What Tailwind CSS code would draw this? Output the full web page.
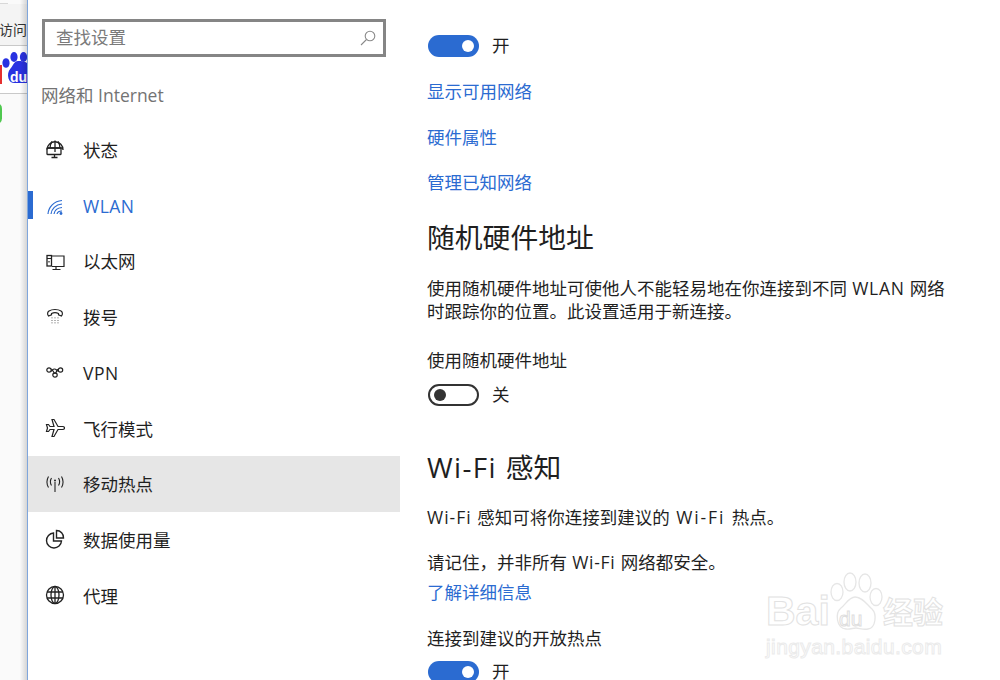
<!DOCTYPE html>
<html lang="zh">
<head>
<meta charset="utf-8">
<script src="https://cdn.jsdelivr.net/npm/@tailwindcss/browser@4"></script>
</head>
<body class="m-0">
<div class="relative flex w-[1000px] h-[680px] overflow-hidden bg-white text-[#1f1f1f] font-['Open_Sans','Noto_Sans_CJK_SC',sans-serif] text-[17.5px]">

  <!-- window behind -->
  <div class="relative w-[27px] shrink-0 h-full overflow-hidden bg-[#fafafa] flex flex-col">
    <div class="h-[4px] border-b border-[#d8d8d8] w-[8px]"></div>
    <div class="h-[41px] pt-[16px] text-[14px] leading-[20px] whitespace-nowrap -ml-[1px] text-[#333] bg-[#f4f4f4]">访问</div>
    <div class="h-[49px] border-y border-[#c9c9c9] bg-white relative">
      <div class="absolute left-0 top-[19px] w-[2px] h-[19px] bg-[#e53030]"></div>
      <svg class="absolute left-0 top-0" width="27" height="47" viewBox="0 0 27 47">
        <ellipse cx="6" cy="17" rx="3.600" ry="4.800" fill="#2932e1"/>
        <ellipse cx="14" cy="11" rx="3.600" ry="5" fill="#2932e1"/>
        <ellipse cx="23.500" cy="11" rx="3.600" ry="5" fill="#2932e1"/>
        <path d="M18 15c-4 0-5 5-7.500 7.500C8 25 7.500 29 8.500 32.500c1 3 3 4.500 6 4.500h12.500V17c-2-1.500-5-2-9-2z" fill="#2932e1"/>
      </svg>
      <span class="absolute left-[10px] top-[23px] text-[14px] leading-[16px] font-bold text-white font-['Liberation_Sans',sans-serif]">du</span>
    </div>
    <div class="mt-[9px] -ml-[9px] w-[11px] h-[21px] rounded-full bg-[#4fc84f]"></div>
    <div class="absolute right-0 top-0 w-[7px] h-full bg-gradient-to-r from-transparent to-black/15"></div>
  </div>
  <div class="w-[1px] shrink-0 h-full bg-[#7fa6dc]"></div>

  <!-- sidebar -->
  <aside class="w-[372px] shrink-0 flex flex-col">
    <div class="ml-[14px] mt-[19px] w-[344px] h-[38px] border-[3px] border-[#858585] flex items-center justify-between pl-[11px] pr-[7px]">
      <span class="text-[#7a7a7a] leading-none">查找设置</span>
      <svg width="16" height="16" viewBox="0 0 16 16" fill="none" stroke="#8a8a8a" stroke-width="1.100"><circle cx="10" cy="6" r="4.800"/><path d="M6.500 9.500L1 15"/></svg>
    </div>
    <div class="ml-[13px] mt-[25px] h-[26px] leading-[26px] text-[#737373]">网络和 Internet</div>

    <div class="mt-[14px] flex flex-col">
      <div class="h-[55.75px] flex items-center pl-[55px] relative">
        <svg class="absolute left-[17px] top-[17px]" width="20" height="20" viewBox="0 0 20 20" fill="none" stroke="#222" stroke-width="1.300"><path d="M2 10.500a8 8 0 1 1 16 .5"/><path d="M2 9h16M7 2.500c-1.500 2-2 4-2 7M13 2.500c1.500 2 2 4 2 7M10 1.500V13"/><rect x="2" y="9" width="14" height="6.500" rx=".5"/><path d="M9.500 15.500V18M6.500 18.500h6"/></svg>
        状态
      </div>
      <div class="h-[55.75px] flex items-center pl-[55px] relative text-[#2b6bd1]">
        <div class="absolute left-0 top-[13px] w-[5px] h-[28px] bg-[#2b6bd1]"></div>
        <svg class="absolute left-[19px] top-[20px]" width="18" height="18" viewBox="0 0 18 18" fill="none" stroke="#2b6bd1" stroke-width="1.200"><path d="M1 16C1.500 9 7 3 15 2.500M4 16c.5-5 4.500-9.500 11-10M7 16c.5-3 3-6 8-6.500M10 16c.300-1.500 2-3 5-3"/><circle cx="14" cy="15.500" r="1.400" fill="#2b6bd1" stroke="none"/></svg>
        <span class="tracking-[.5px]">WLAN</span>
      </div>
      <div class="h-[55.75px] flex items-center pl-[55px] relative">
        <svg class="absolute left-[17px] top-[18px]" width="20" height="20" viewBox="0 0 20 20" fill="none" stroke="#222" stroke-width="1.200"><path d="M6 4h13v10.500H7M11 14.500V17M7.500 17.500h8"/><rect x="2" y="3.500" width="4.500" height="10.500" stroke-width="1.300"/><path d="M2 6.500h4.500M4 10.500V9"/></svg>
        以太网
      </div>
      <div class="h-[55.75px] flex items-center pl-[55px] relative">
        <svg class="absolute left-[17px] top-[17px]" width="20" height="20" viewBox="0 0 20 20" fill="none" stroke="#222" stroke-width="1.200"><path d="M3.500 10c-1.500-2-1-4 .5-5 3-2 9-2 12 0 1.500 1 2 3 .5 5l-3-1.200V7.500c-2-1-5-1-7 0v1.300z"/><path d="M7 11.500v.8M10 11.500v.8M13 11.500v.8M7 14v.8M10 14v.8M13 14v.8M7 16.500v.8M10 16.500v.8M13 16.500v.8" stroke="#555"/></svg>
        拨号
      </div>
      <div class="h-[55.75px] flex items-center pl-[55px] relative">
        <svg class="absolute left-[17px] top-[17px]" width="20" height="20" viewBox="0 0 20 20" fill="none" stroke="#222" stroke-width="1.200"><circle cx="4" cy="8" r="2.200"/><circle cx="15.500" cy="8" r="2.200"/><circle cx="10" cy="13" r="2.200"/><path d="M6 9c1 0 1.500-2 3.500-2s2 2 4 2M6 7c2 0 2.500 4.500 4 4.500M13.500 7c-2 0-2 4.500-3.500 4.500"/></svg>
        <span class="tracking-[.5px]">VPN</span>
      </div>
      <div class="h-[55.75px] flex items-center pl-[55px] relative">
        <svg class="absolute left-[17px] top-[17px]" width="20" height="20" viewBox="0 0 20 20" fill="none" stroke="#222" stroke-width="1.200"><path d="M7 1.500h2l4 7h4.500c1.500 0 2 1 2 1.500s-.5 1.500-2 1.500H13l-4 7H7l2-7H5l-1.500 2H1.500l1-3.500-1-3.500h2L5 8.500h4z"/></svg>
        飞行模式
      </div>
      <div class="h-[56.75px] flex items-center pl-[55px] pt-[1px] relative bg-[#e6e6e6] -mt-[1px]">
        <svg class="absolute left-[17px] top-[18px]" width="20" height="20" viewBox="0 0 20 20" fill="none" stroke="#222" stroke-width="1.100"><path d="M10 8v10"/><path d="M6.500 4C5 6.500 5 9 6.500 11.500M13.500 4c1.500 2.500 1.500 5 0 7.500M3.500 2.500c-2 3.500-2 7.500 0 11M16.500 2.500c2 3.500 2 7.500 0 11"/><circle cx="10" cy="6.500" r="1" fill="#222" stroke="none"/></svg>
        移动热点
      </div>
      <div class="h-[55.75px] flex items-center pl-[55px] relative">
        <svg class="absolute left-[17px] top-[17px]" width="20" height="20" viewBox="0 0 20 20" fill="none" stroke="#222" stroke-width="1.400"><path d="M8.500 4a7.500 7.500 0 1 0 8 8H8.500z"/><path d="M11.500 1.500a7 7 0 0 1 7 7.500h-7z"/></svg>
        数据使用量
      </div>
      <div class="h-[55.75px] flex items-center pl-[55px] relative">
        <svg class="absolute left-[17px] top-[17px]" width="20" height="20" viewBox="0 0 20 20" fill="none" stroke="#222" stroke-width="1.300"><circle cx="10" cy="10" r="8.500"/><ellipse cx="10" cy="10" rx="4" ry="8.500"/><path d="M10 1.500v17M2 7h16M2 13h16"/></svg>
        代理
      </div>
    </div>
  </aside>

  <!-- content -->
  <main class="flex-1 -ml-[1px] pl-[28px] pt-[35px] leading-[23px]">
    <div class="flex items-center h-[22px] gap-[13px] ml-[1px]">
      <div class="w-[51px] h-[22px] rounded-full bg-[#2b6bd1] flex items-center justify-end pr-[5px]"><div class="w-[12px] h-[12px] rounded-full bg-white"></div></div>
      <span class="-mt-[2px]">开</span>
    </div>
    <div class="mt-[23px] h-[23px] text-[#2b6bd1]">显示可用网络</div>
    <div class="mt-[22.500px] h-[23px] text-[#2b6bd1]">硬件属性</div>
    <div class="mt-[22.500px] h-[23px] text-[#2b6bd1]">管理已知网络</div>
    <h2 class="mt-[23px] h-[40px] text-[27.800px] leading-[40px] font-normal">随机硬件地址</h2>
    <p class="mt-[20px] w-[530px]">使用随机硬件地址可使他人不能轻易地在你连接到不同<span class="tracking-[.7px]"> WLAN </span>网络时跟踪你的位置。此设置适用于新连接。</p>
    <div class="mt-[26px] h-[23px]">使用随机硬件地址</div>
    <div class="mt-[12px] flex items-center h-[22px] gap-[13px] ml-[1px]">
      <div class="w-[51px] h-[22px] rounded-full border-2 border-[#333] flex items-center pl-[4px]"><div class="w-[12px] h-[12px] rounded-full bg-[#333]"></div></div>
      <span class="-mt-[2px]">关</span>
    </div>
    <h2 class="mt-[41px] h-[40px] text-[27.800px] leading-[40px] font-normal"><span class="tracking-[1.400px]">Wi-Fi </span>感知</h2>
    <div class="mt-[19px] h-[23px]"><span class="tracking-[1px]">Wi-Fi </span>感知可将你连接到建议的<span class="tracking-[1.900px]"> Wi-Fi </span>热点。</div>
    <div class="mt-[22px] h-[23px]">请记住，并非所有<span class="tracking-[.7px]"> Wi-Fi </span>网络都安全。</div>
    <div class="mt-[7px] h-[23px] text-[#2b6bd1]">了解详细信息</div>
    <div class="mt-[23px] h-[23px]">连接到建议的开放热点</div>
    <div class="mt-[11px] flex items-center h-[22px] gap-[13px] ml-[1px]">
      <div class="w-[51px] h-[22px] rounded-full bg-[#2b6bd1] flex items-center justify-end pr-[5px]"><div class="w-[12px] h-[12px] rounded-full bg-white"></div></div>
      <span class="-mt-[2px]">开</span>
    </div>
  </main>

  <!-- watermark -->
  <div class="absolute left-[766px] top-[572px] w-[190px] h-[90px] pointer-events-none">
    <svg class="absolute left-[60px] top-0" width="58" height="60" viewBox="0 0 58 60" fill="rgba(255,255,255,.7)" stroke="#e6e6e6" stroke-width="1.300">
      <ellipse cx="11" cy="20" rx="6" ry="8.500"/>
      <ellipse cx="24" cy="10" rx="6" ry="9"/>
      <ellipse cx="39" cy="11" rx="6" ry="9"/>
      <ellipse cx="50" cy="25" rx="6" ry="8.500"/>
      <path d="M29 25c-6 0-9 7-14 11-6 5-5 20 5 21 4 .5 7-1 10-1s7 2 12 1c8-1 9-15 4-20-5-4-9-12-17-12z"/>
    </svg>
    <span class="absolute left-[73px] top-[37px] text-[21px] leading-[20px] text-transparent [-webkit-text-stroke:1px_#dedede] font-['Liberation_Sans',sans-serif]">du</span>
    <span class="absolute left-0 top-[19px] text-[41px] leading-[41px] font-bold text-transparent [-webkit-text-stroke:1px_#e2e2e2] font-['Liberation_Sans',sans-serif]">Bai</span>
    <span class="absolute left-[117px] top-[22px] text-[30px] leading-[36px] font-bold text-transparent [-webkit-text-stroke:1px_#e2e2e2]">经验</span>
    <span class="absolute left-0 top-[62px] text-[21px] leading-[26px] tracking-[.4px] text-transparent [-webkit-text-stroke:1px_#ebebeb] font-['Liberation_Sans',sans-serif]">jingyan.baidu.com</span>
  </div>
</div>
</body>
</html>
